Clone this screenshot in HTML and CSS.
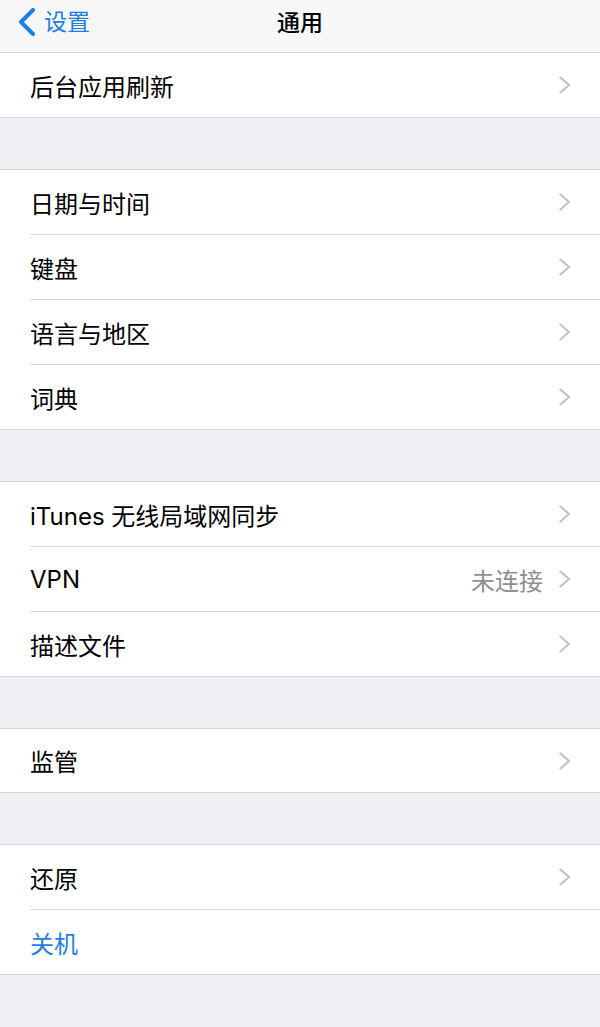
FILE: index.html
```html
<!DOCTYPE html>
<html lang="zh-CN">
<head>
    <meta charset="UTF-8">
    <meta name="viewport" content="width=device-width, initial-scale=1.0">
    <title>通用</title>
    <link rel="stylesheet" href="styles.css">
</head>
<body>
    <header class="navbar">
        <a class="back" href="#">
            <svg class="back-icon" viewBox="0 0 20 28" width="20" height="28">
                <path d="M16 2 L4 14 L16 26" fill="none" stroke="currentColor" stroke-width="4" stroke-linecap="round" stroke-linejoin="round"/>
            </svg>
            <span>设置</span>
        </a>
        <h1 class="title">通用</h1>
    </header>

    <main class="settings">
        <ul class="group first">
            <li class="row"><span class="label">后台应用刷新</span><svg class="chevron" viewBox="0 0 12 18"><path d="M1.5 1.5 L10 9 L1.5 16.5"/></svg></li>
        </ul>

        <ul class="group">
            <li class="row"><span class="label">日期与时间</span><svg class="chevron" viewBox="0 0 12 18"><path d="M1.5 1.5 L10 9 L1.5 16.5"/></svg></li>
            <li class="row"><span class="label">键盘</span><svg class="chevron" viewBox="0 0 12 18"><path d="M1.5 1.5 L10 9 L1.5 16.5"/></svg></li>
            <li class="row"><span class="label">语言与地区</span><svg class="chevron" viewBox="0 0 12 18"><path d="M1.5 1.5 L10 9 L1.5 16.5"/></svg></li>
            <li class="row"><span class="label">词典</span><svg class="chevron" viewBox="0 0 12 18"><path d="M1.5 1.5 L10 9 L1.5 16.5"/></svg></li>
        </ul>

        <ul class="group">
            <li class="row"><span class="label">iTunes 无线局域网同步</span><svg class="chevron" viewBox="0 0 12 18"><path d="M1.5 1.5 L10 9 L1.5 16.5"/></svg></li>
            <li class="row"><span class="label">VPN</span><span class="detail">未连接</span><svg class="chevron" viewBox="0 0 12 18"><path d="M1.5 1.5 L10 9 L1.5 16.5"/></svg></li>
            <li class="row"><span class="label">描述文件</span><svg class="chevron" viewBox="0 0 12 18"><path d="M1.5 1.5 L10 9 L1.5 16.5"/></svg></li>
        </ul>

        <ul class="group">
            <li class="row short"><span class="label">监管</span><svg class="chevron" viewBox="0 0 12 18"><path d="M1.5 1.5 L10 9 L1.5 16.5"/></svg></li>
        </ul>

        <ul class="group">
            <li class="row"><span class="label">还原</span><svg class="chevron" viewBox="0 0 12 18"><path d="M1.5 1.5 L10 9 L1.5 16.5"/></svg></li>
            <li class="row"><span class="label action">关机</span></li>
        </ul>
    </main>
</body>
</html>
```

FILE: styles.css
```css
body {
    margin: 0;
    padding: 0;
    background: #efeff4;
    font-family: "Inter", "Noto Sans CJK SC", sans-serif;
    color: #000;
}

.navbar {
    height: 52px;
    background: #f7f7f7;
    border-bottom: 1px solid #d6d6da;
    display: flex;
    align-items: center;
    justify-content: center;
    position: relative;
}

.back {
    position: absolute;
    left: 17px;
    top: 8px;
    display: flex;
    align-items: center;
    gap: 7px;
    color: #1f7ee3;
    text-decoration: none;
    font-size: 23px;
    line-height: 28px;
}

.back-icon {
    display: block;
}

.title {
    margin: 0;
    font-size: 23px;
    font-weight: 500;
    line-height: 1;
    margin-top: -6px;
}

.settings {
    padding-bottom: 40px;
}

.group {
    list-style: none;
    margin: 51px 0 0;
    padding: 0;
    background: #fff;
    border-top: 1px solid #d8d8dc;
    border-bottom: 1px solid #d8d8dc;
}

.group.first {
    margin-top: 0;
    border-top: none;
}

.row {
    height: 64px;
    display: flex;
    align-items: center;
    padding: 0 29px 0 0;
    margin-left: 30px;
    font-size: 24px;
}

.row.short {
    height: 63px;
}

.row + .row {
    border-top: 1px solid #dcdce0;
}

.label {
    flex: 1;
}

.label.action {
    color: #1f7ee3;
}

.detail {
    color: #8e8e93;
    margin-right: 16px;
}

.chevron {
    width: 12px;
    height: 18px;
    fill: none;
    stroke: #c4c4c8;
    stroke-width: 2.3;
    stroke-linecap: round;
    stroke-linejoin: round;
}
```
